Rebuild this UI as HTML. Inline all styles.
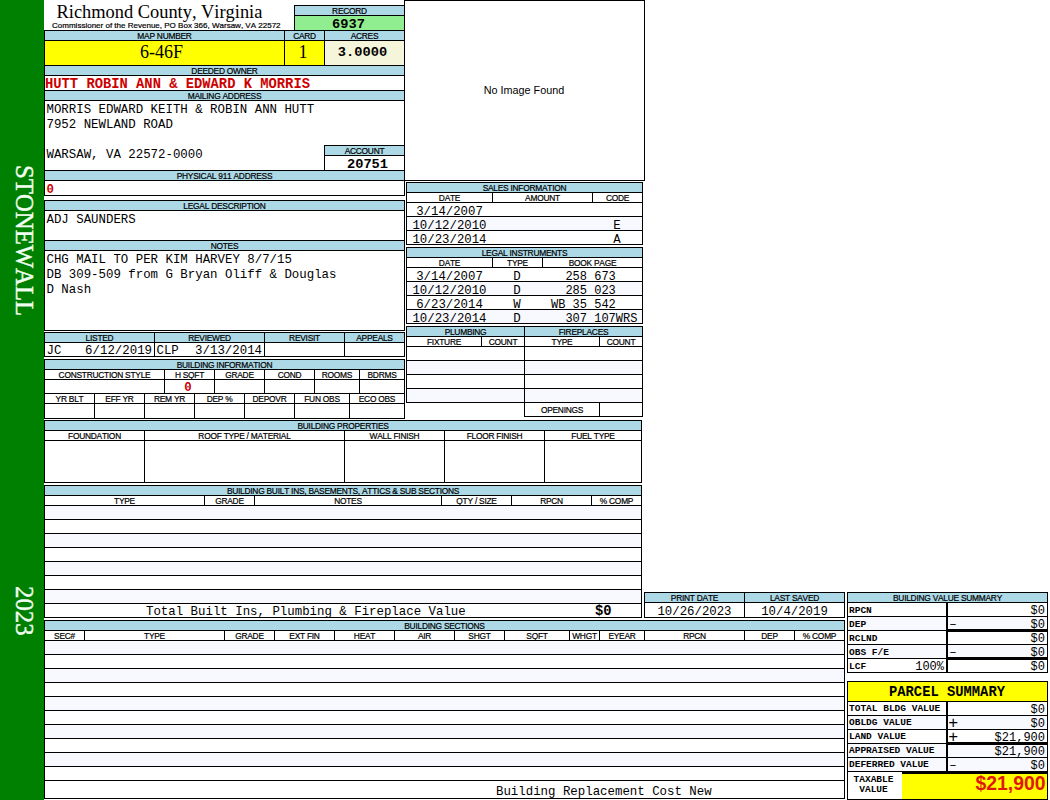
<!DOCTYPE html>
<html><head><meta charset="utf-8"><title>Richmond County, Virginia</title>
<style>
html,body{margin:0;padding:0;background:#fff;}
body{font-kerning:none;font-variant-ligatures:none;width:1050px;height:800px;position:relative;overflow:hidden;font-family:"Liberation Sans",sans-serif;color:#000;}
#bar{position:absolute;left:0;top:0;width:44px;height:800px;background:#008000;}
.v{position:absolute;transform-origin:0 0;transform:rotate(90deg);font-family:"Liberation Serif",serif;font-size:24.75px;line-height:27px;color:#f0fff0;-webkit-text-stroke:0.4px #f0fff0;white-space:nowrap;}
.c{position:absolute;box-sizing:border-box;border:1px solid #000;background:#fff;}
.t{position:absolute;white-space:pre;}
.k{position:absolute;background:#000;}
.sans{font-family:"Liberation Sans",sans-serif;}
.ser{font-family:"Liberation Serif",serif;}
.mono{font-family:"Liberation Mono",monospace;}
</style></head>
<body>
<div id="bar"></div>
<div class="v" style="left:38px;top:165px;">STONEWALL</div>
<div class="v" style="left:38px;top:586px;">2023</div>
<div class="t ser" style="top:2px;font-size:18.4px;line-height:20px;left:56.5px;">Richmond County, Virginia</div>
<div class="t sans" style="top:21px;font-size:8.03px;line-height:9px;left:52px;-webkit-text-stroke:0.2px #000;">Commissioner of the Revenue, PO Box 366, Warsaw, VA 22572</div>
<div class="c" style="left:294px;top:5px;width:111px;height:11px;background:#add8e6;"></div>
<div class="t sans" style="top:6px;font-size:8.4px;line-height:10px;left:264.5px;width:170px;text-align:center;letter-spacing:-0.25px;-webkit-text-stroke:0.2px #000;">RECORD</div>
<div class="c" style="left:294px;top:15px;width:111px;height:16px;background:#90ee90;"></div>
<div class="t mono" style="top:17px;font-size:13.7px;line-height:15px;left:148.5px;width:400px;text-align:center;font-weight:bold;">6937</div>
<div class="c" style="left:44px;top:30px;width:241px;height:11px;background:#add8e6;"></div>
<div class="t sans" style="top:31px;font-size:8.4px;line-height:10px;left:14.5px;width:300px;text-align:center;letter-spacing:-0.25px;-webkit-text-stroke:0.2px #000;">MAP NUMBER</div>
<div class="c" style="left:284px;top:30px;width:41px;height:11px;background:#add8e6;"></div>
<div class="t sans" style="top:31px;font-size:8.4px;line-height:10px;left:254.5px;width:100px;text-align:center;letter-spacing:-0.25px;-webkit-text-stroke:0.2px #000;">CARD</div>
<div class="c" style="left:324px;top:30px;width:81px;height:11px;background:#add8e6;"></div>
<div class="t sans" style="top:31px;font-size:8.4px;line-height:10px;left:294.5px;width:140px;text-align:center;letter-spacing:-0.25px;-webkit-text-stroke:0.2px #000;">ACRES</div>
<div class="c" style="left:44px;top:40px;width:241px;height:26px;background:#ffff00;"></div>
<div class="t ser" style="top:42px;font-size:18px;line-height:20px;left:-38.5px;width:400px;text-align:center;">6-46F</div>
<div class="c" style="left:284px;top:40px;width:41px;height:26px;background:#ffff00;"></div>
<div class="t ser" style="top:42px;font-size:18px;line-height:20px;left:103.0px;width:400px;text-align:center;">1</div>
<div class="c" style="left:324px;top:40px;width:81px;height:26px;background:#f5f5dc;"></div>
<div class="t mono" style="top:45px;font-size:13.7px;line-height:15px;left:162.5px;width:400px;text-align:center;font-weight:bold;">3.0000</div>
<div class="c" style="left:44px;top:65px;width:361px;height:11px;background:#add8e6;"></div>
<div class="t sans" style="top:66px;font-size:8.4px;line-height:10px;left:14.5px;width:420px;text-align:center;letter-spacing:-0.25px;-webkit-text-stroke:0.2px #000;">DEEDED OWNER</div>
<div class="c" style="left:44px;top:75px;width:361px;height:16px;"></div>
<div class="t mono" style="top:77px;font-size:13.8px;line-height:15px;left:45px;font-weight:bold;color:#cc0000;">HUTT ROBIN ANN &amp; EDWARD K MORRIS</div>
<div class="c" style="left:44px;top:90px;width:361px;height:11px;background:#add8e6;"></div>
<div class="t sans" style="top:91px;font-size:8.4px;line-height:10px;left:14.5px;width:420px;text-align:center;letter-spacing:-0.25px;-webkit-text-stroke:0.2px #000;">MAILING ADDRESS</div>
<div class="c" style="left:44px;top:100px;width:361px;height:71px;"></div>
<div class="t mono" style="top:103px;font-size:12.4px;line-height:14px;left:46.5px;">MORRIS EDWARD KEITH &amp; ROBIN ANN HUTT</div>
<div class="t mono" style="top:118px;font-size:12.4px;line-height:14px;left:46.5px;">7952 NEWLAND ROAD</div>
<div class="t mono" style="top:148px;font-size:12.4px;line-height:14px;left:46.5px;">WARSAW, VA 22572-0000</div>
<div class="c" style="left:324px;top:145px;width:81px;height:11px;background:#add8e6;"></div>
<div class="t sans" style="top:146px;font-size:8.4px;line-height:10px;left:294.5px;width:140px;text-align:center;letter-spacing:-0.25px;-webkit-text-stroke:0.2px #000;">ACCOUNT</div>
<div class="c" style="left:324px;top:155px;width:81px;height:16px;"></div>
<div class="t mono" style="top:157px;font-size:13.7px;line-height:15px;left:167.5px;width:400px;text-align:center;font-weight:bold;">20751</div>
<div class="c" style="left:44px;top:170px;width:361px;height:11px;background:#add8e6;"></div>
<div class="t sans" style="top:171px;font-size:8.4px;line-height:10px;left:14.5px;width:420px;text-align:center;letter-spacing:-0.25px;-webkit-text-stroke:0.2px #000;">PHYSICAL 911 ADDRESS</div>
<div class="c" style="left:44px;top:180px;width:361px;height:16px;"></div>
<div class="t mono" style="top:183px;font-size:12.4px;line-height:14px;left:46.5px;font-weight:bold;color:#cc0000;">0</div>
<div class="c" style="left:44px;top:200px;width:361px;height:11px;background:#add8e6;"></div>
<div class="t sans" style="top:201px;font-size:8.4px;line-height:10px;left:14.5px;width:420px;text-align:center;letter-spacing:-0.25px;-webkit-text-stroke:0.2px #000;">LEGAL DESCRIPTION</div>
<div class="c" style="left:44px;top:210px;width:361px;height:31px;"></div>
<div class="t mono" style="top:213px;font-size:12.4px;line-height:14px;left:46.5px;">ADJ SAUNDERS</div>
<div class="c" style="left:44px;top:240px;width:361px;height:11px;background:#add8e6;"></div>
<div class="t sans" style="top:241px;font-size:8.4px;line-height:10px;left:14.5px;width:420px;text-align:center;letter-spacing:-0.25px;-webkit-text-stroke:0.2px #000;">NOTES</div>
<div class="c" style="left:44px;top:250px;width:361px;height:81px;"></div>
<div class="t mono" style="top:253px;font-size:12.4px;line-height:14px;left:46.5px;">CHG MAIL TO PER KIM HARVEY 8/7/15</div>
<div class="t mono" style="top:268px;font-size:12.4px;line-height:14px;left:46.5px;">DB 309-509 from G Bryan Oliff &amp; Douglas</div>
<div class="t mono" style="top:283px;font-size:12.4px;line-height:14px;left:46.5px;">D Nash</div>
<div class="c" style="left:44px;top:332px;width:111px;height:11px;background:#add8e6;"></div>
<div class="t sans" style="top:333px;font-size:8.4px;line-height:10px;left:14.5px;width:170px;text-align:center;letter-spacing:-0.25px;-webkit-text-stroke:0.2px #000;">LISTED</div>
<div class="c" style="left:44px;top:342px;width:111px;height:15px;"></div>
<div class="t mono" style="top:344px;font-size:12.4px;line-height:14px;left:46.5px;">JC</div>
<div class="t mono" style="top:344px;font-size:12.4px;line-height:14px;left:-248px;width:400px;text-align:right;">6/12/2019</div>
<div class="c" style="left:154px;top:332px;width:111px;height:11px;background:#add8e6;"></div>
<div class="t sans" style="top:333px;font-size:8.4px;line-height:10px;left:124.5px;width:170px;text-align:center;letter-spacing:-0.25px;-webkit-text-stroke:0.2px #000;">REVIEWED</div>
<div class="c" style="left:154px;top:342px;width:111px;height:15px;"></div>
<div class="t mono" style="top:344px;font-size:12.4px;line-height:14px;left:156.5px;">CLP</div>
<div class="t mono" style="top:344px;font-size:12.4px;line-height:14px;left:-138px;width:400px;text-align:right;">3/13/2014</div>
<div class="c" style="left:264px;top:332px;width:81px;height:11px;background:#add8e6;"></div>
<div class="t sans" style="top:333px;font-size:8.4px;line-height:10px;left:234.5px;width:140px;text-align:center;letter-spacing:-0.25px;-webkit-text-stroke:0.2px #000;">REVISIT</div>
<div class="c" style="left:264px;top:342px;width:81px;height:15px;"></div>
<div class="c" style="left:344px;top:332px;width:61px;height:11px;background:#add8e6;"></div>
<div class="t sans" style="top:333px;font-size:8.4px;line-height:10px;left:314.5px;width:120px;text-align:center;letter-spacing:-0.25px;-webkit-text-stroke:0.2px #000;">APPEALS</div>
<div class="c" style="left:344px;top:342px;width:61px;height:15px;"></div>
<div class="c" style="left:44px;top:359px;width:361px;height:11px;background:#add8e6;"></div>
<div class="t sans" style="top:360px;font-size:8.4px;line-height:10px;left:14.5px;width:420px;text-align:center;letter-spacing:-0.25px;-webkit-text-stroke:0.2px #000;">BUILDING INFORMATION</div>
<div class="c" style="left:44px;top:369px;width:121px;height:11px;"></div>
<div class="t sans" style="top:370px;font-size:8.4px;line-height:10px;left:14.5px;width:180px;text-align:center;letter-spacing:-0.25px;-webkit-text-stroke:0.2px #000;">CONSTRUCTION STYLE</div>
<div class="c" style="left:44px;top:379px;width:121px;height:15px;"></div>
<div class="c" style="left:164px;top:369px;width:51px;height:11px;"></div>
<div class="t sans" style="top:370px;font-size:8.4px;line-height:10px;left:134.5px;width:110px;text-align:center;letter-spacing:-0.25px;-webkit-text-stroke:0.2px #000;">H SQFT</div>
<div class="c" style="left:164px;top:379px;width:51px;height:15px;"></div>
<div class="c" style="left:214px;top:369px;width:51px;height:11px;"></div>
<div class="t sans" style="top:370px;font-size:8.4px;line-height:10px;left:184.5px;width:110px;text-align:center;letter-spacing:-0.25px;-webkit-text-stroke:0.2px #000;">GRADE</div>
<div class="c" style="left:214px;top:379px;width:51px;height:15px;"></div>
<div class="c" style="left:264px;top:369px;width:51px;height:11px;"></div>
<div class="t sans" style="top:370px;font-size:8.4px;line-height:10px;left:234.5px;width:110px;text-align:center;letter-spacing:-0.25px;-webkit-text-stroke:0.2px #000;">COND</div>
<div class="c" style="left:264px;top:379px;width:51px;height:15px;"></div>
<div class="c" style="left:314px;top:369px;width:46px;height:11px;"></div>
<div class="t sans" style="top:370px;font-size:8.4px;line-height:10px;left:284.5px;width:105px;text-align:center;letter-spacing:-0.25px;-webkit-text-stroke:0.2px #000;">ROOMS</div>
<div class="c" style="left:314px;top:379px;width:46px;height:15px;"></div>
<div class="c" style="left:359px;top:369px;width:46px;height:11px;"></div>
<div class="t sans" style="top:370px;font-size:8.4px;line-height:10px;left:329.5px;width:105px;text-align:center;letter-spacing:-0.25px;-webkit-text-stroke:0.2px #000;">BDRMS</div>
<div class="c" style="left:359px;top:379px;width:46px;height:15px;"></div>
<div class="t mono" style="top:381px;font-size:12.4px;line-height:14px;left:-12.0px;width:400px;text-align:center;font-weight:bold;color:#cc0000;">0</div>
<div class="c" style="left:44px;top:393px;width:51px;height:11px;"></div>
<div class="t sans" style="top:394px;font-size:8.4px;line-height:10px;left:14.5px;width:110px;text-align:center;letter-spacing:-0.25px;-webkit-text-stroke:0.2px #000;">YR BLT</div>
<div class="c" style="left:44px;top:403px;width:51px;height:16px;"></div>
<div class="c" style="left:94px;top:393px;width:51px;height:11px;"></div>
<div class="t sans" style="top:394px;font-size:8.4px;line-height:10px;left:64.5px;width:110px;text-align:center;letter-spacing:-0.25px;-webkit-text-stroke:0.2px #000;">EFF YR</div>
<div class="c" style="left:94px;top:403px;width:51px;height:16px;"></div>
<div class="c" style="left:144px;top:393px;width:51px;height:11px;"></div>
<div class="t sans" style="top:394px;font-size:8.4px;line-height:10px;left:114.5px;width:110px;text-align:center;letter-spacing:-0.25px;-webkit-text-stroke:0.2px #000;">REM YR</div>
<div class="c" style="left:144px;top:403px;width:51px;height:16px;"></div>
<div class="c" style="left:194px;top:393px;width:51px;height:11px;"></div>
<div class="t sans" style="top:394px;font-size:8.4px;line-height:10px;left:164.5px;width:110px;text-align:center;letter-spacing:-0.25px;-webkit-text-stroke:0.2px #000;">DEP %</div>
<div class="c" style="left:194px;top:403px;width:51px;height:16px;"></div>
<div class="c" style="left:244px;top:393px;width:51px;height:11px;"></div>
<div class="t sans" style="top:394px;font-size:8.4px;line-height:10px;left:214.5px;width:110px;text-align:center;letter-spacing:-0.25px;-webkit-text-stroke:0.2px #000;">DEPOVR</div>
<div class="c" style="left:244px;top:403px;width:51px;height:16px;"></div>
<div class="c" style="left:294px;top:393px;width:56px;height:11px;"></div>
<div class="t sans" style="top:394px;font-size:8.4px;line-height:10px;left:264.5px;width:115px;text-align:center;letter-spacing:-0.25px;-webkit-text-stroke:0.2px #000;">FUN OBS</div>
<div class="c" style="left:294px;top:403px;width:56px;height:16px;"></div>
<div class="c" style="left:349px;top:393px;width:56px;height:11px;"></div>
<div class="t sans" style="top:394px;font-size:8.4px;line-height:10px;left:319.5px;width:115px;text-align:center;letter-spacing:-0.25px;-webkit-text-stroke:0.2px #000;">ECO OBS</div>
<div class="c" style="left:349px;top:403px;width:56px;height:16px;"></div>
<div class="c" style="left:44px;top:420px;width:598px;height:11px;background:#add8e6;"></div>
<div class="t sans" style="top:421px;font-size:8.4px;line-height:10px;left:14.5px;width:657px;text-align:center;letter-spacing:-0.25px;-webkit-text-stroke:0.2px #000;">BUILDING PROPERTIES</div>
<div class="c" style="left:44px;top:430px;width:101px;height:11px;"></div>
<div class="t sans" style="top:431px;font-size:8.4px;line-height:10px;left:14.5px;width:160px;text-align:center;letter-spacing:-0.25px;-webkit-text-stroke:0.2px #000;">FOUNDATION</div>
<div class="c" style="left:44px;top:440px;width:101px;height:43px;"></div>
<div class="c" style="left:144px;top:430px;width:201px;height:11px;"></div>
<div class="t sans" style="top:431px;font-size:8.4px;line-height:10px;left:114.5px;width:260px;text-align:center;letter-spacing:-0.25px;-webkit-text-stroke:0.2px #000;">ROOF TYPE / MATERIAL</div>
<div class="c" style="left:144px;top:440px;width:201px;height:43px;"></div>
<div class="c" style="left:344px;top:430px;width:101px;height:11px;"></div>
<div class="t sans" style="top:431px;font-size:8.4px;line-height:10px;left:314.5px;width:160px;text-align:center;letter-spacing:-0.25px;-webkit-text-stroke:0.2px #000;">WALL FINISH</div>
<div class="c" style="left:344px;top:440px;width:101px;height:43px;"></div>
<div class="c" style="left:444px;top:430px;width:101px;height:11px;"></div>
<div class="t sans" style="top:431px;font-size:8.4px;line-height:10px;left:414.5px;width:160px;text-align:center;letter-spacing:-0.25px;-webkit-text-stroke:0.2px #000;">FLOOR FINISH</div>
<div class="c" style="left:444px;top:440px;width:101px;height:43px;"></div>
<div class="c" style="left:544px;top:430px;width:98px;height:11px;"></div>
<div class="t sans" style="top:431px;font-size:8.4px;line-height:10px;left:514.5px;width:157px;text-align:center;letter-spacing:-0.25px;-webkit-text-stroke:0.2px #000;">FUEL TYPE</div>
<div class="c" style="left:544px;top:440px;width:98px;height:43px;"></div>
<div class="c" style="left:44px;top:485px;width:598px;height:11px;background:#add8e6;"></div>
<div class="t sans" style="top:486px;font-size:8.4px;line-height:10px;left:14.5px;width:657px;text-align:center;letter-spacing:-0.25px;-webkit-text-stroke:0.2px #000;">BUILDING BUILT INS, BASEMENTS, ATTICS &amp; SUB SECTIONS</div>
<div class="c" style="left:44px;top:495px;width:161px;height:11px;"></div>
<div class="t sans" style="top:496px;font-size:8.4px;line-height:10px;left:14.5px;width:220px;text-align:center;letter-spacing:-0.25px;-webkit-text-stroke:0.2px #000;">TYPE</div>
<div class="c" style="left:204px;top:495px;width:51px;height:11px;"></div>
<div class="t sans" style="top:496px;font-size:8.4px;line-height:10px;left:174.5px;width:110px;text-align:center;letter-spacing:-0.25px;-webkit-text-stroke:0.2px #000;">GRADE</div>
<div class="c" style="left:254px;top:495px;width:188px;height:11px;"></div>
<div class="t sans" style="top:496px;font-size:8.4px;line-height:10px;left:224.5px;width:247px;text-align:center;letter-spacing:-0.25px;-webkit-text-stroke:0.2px #000;">NOTES</div>
<div class="c" style="left:441px;top:495px;width:71px;height:11px;"></div>
<div class="t sans" style="top:496px;font-size:8.4px;line-height:10px;left:411.5px;width:130px;text-align:center;letter-spacing:-0.25px;-webkit-text-stroke:0.2px #000;">QTY / SIZE</div>
<div class="c" style="left:511px;top:495px;width:81px;height:11px;"></div>
<div class="t sans" style="top:496px;font-size:8.4px;line-height:10px;left:481.5px;width:140px;text-align:center;letter-spacing:-0.25px;-webkit-text-stroke:0.2px #000;">RPCN</div>
<div class="c" style="left:591px;top:495px;width:51px;height:11px;"></div>
<div class="t sans" style="top:496px;font-size:8.4px;line-height:10px;left:561.5px;width:110px;text-align:center;letter-spacing:-0.25px;-webkit-text-stroke:0.2px #000;">% COMP</div>
<div class="c" style="left:44px;top:505px;width:598px;height:15px;background:#f8f8ff;"></div>
<div class="c" style="left:44px;top:519px;width:598px;height:15px;"></div>
<div class="c" style="left:44px;top:533px;width:598px;height:15px;background:#f8f8ff;"></div>
<div class="c" style="left:44px;top:547px;width:598px;height:15px;"></div>
<div class="c" style="left:44px;top:561px;width:598px;height:15px;background:#f8f8ff;"></div>
<div class="c" style="left:44px;top:575px;width:598px;height:15px;"></div>
<div class="c" style="left:44px;top:589px;width:598px;height:15px;background:#f8f8ff;"></div>
<div class="c" style="left:44px;top:603px;width:598px;height:15px;"></div>
<div class="t mono" style="top:605px;font-size:12.4px;line-height:14px;left:146px;">Total Built Ins, Plumbing &amp; Fireplace Value</div>
<div class="t mono" style="top:604px;font-size:13.8px;line-height:15px;left:595px;font-weight:bold;">$0</div>
<div class="c" style="left:404px;top:0px;width:241px;height:181px;"></div>
<div class="t sans" style="top:84px;font-size:10.8px;line-height:12px;left:324.0px;width:400px;text-align:center;">No Image Found</div>
<div class="c" style="left:406px;top:182px;width:237px;height:11px;background:#add8e6;"></div>
<div class="t sans" style="top:183px;font-size:8.4px;line-height:10px;left:376.5px;width:296px;text-align:center;letter-spacing:-0.25px;-webkit-text-stroke:0.2px #000;">SALES INFORMATION</div>
<div class="c" style="left:406px;top:192px;width:87px;height:11px;"></div>
<div class="t sans" style="top:193px;font-size:8.4px;line-height:10px;left:376.5px;width:146px;text-align:center;letter-spacing:-0.25px;-webkit-text-stroke:0.2px #000;">DATE</div>
<div class="c" style="left:492px;top:192px;width:101px;height:11px;"></div>
<div class="t sans" style="top:193px;font-size:8.4px;line-height:10px;left:462.5px;width:160px;text-align:center;letter-spacing:-0.25px;-webkit-text-stroke:0.2px #000;">AMOUNT</div>
<div class="c" style="left:592px;top:192px;width:51px;height:11px;"></div>
<div class="t sans" style="top:193px;font-size:8.4px;line-height:10px;left:562.5px;width:110px;text-align:center;letter-spacing:-0.25px;-webkit-text-stroke:0.2px #000;">CODE</div>
<div class="c" style="left:406px;top:202px;width:237px;height:15px;"></div>
<div class="t mono" style="top:205px;font-size:12.35px;line-height:14px;left:249.5px;width:400px;text-align:center;">3/14/2007</div>
<div class="c" style="left:406px;top:216px;width:237px;height:15px;background:#f8f8ff;"></div>
<div class="t mono" style="top:219px;font-size:12.35px;line-height:14px;left:249.5px;width:400px;text-align:center;">10/12/2010</div>
<div class="t mono" style="top:219px;font-size:12.4px;line-height:14px;left:417.0px;width:400px;text-align:center;">E</div>
<div class="c" style="left:406px;top:230px;width:237px;height:15px;"></div>
<div class="t mono" style="top:233px;font-size:12.35px;line-height:14px;left:249.5px;width:400px;text-align:center;">10/23/2014</div>
<div class="t mono" style="top:233px;font-size:12.4px;line-height:14px;left:417.0px;width:400px;text-align:center;">A</div>
<div class="c" style="left:406px;top:247px;width:237px;height:11px;background:#add8e6;"></div>
<div class="t sans" style="top:248px;font-size:8.4px;line-height:10px;left:376.5px;width:296px;text-align:center;letter-spacing:-0.25px;-webkit-text-stroke:0.2px #000;">LEGAL INSTRUMENTS</div>
<div class="c" style="left:406px;top:257px;width:87px;height:11px;"></div>
<div class="t sans" style="top:258px;font-size:8.4px;line-height:10px;left:376.5px;width:146px;text-align:center;letter-spacing:-0.25px;-webkit-text-stroke:0.2px #000;">DATE</div>
<div class="c" style="left:492px;top:257px;width:51px;height:11px;"></div>
<div class="t sans" style="top:258px;font-size:8.4px;line-height:10px;left:462.5px;width:110px;text-align:center;letter-spacing:-0.25px;-webkit-text-stroke:0.2px #000;">TYPE</div>
<div class="c" style="left:542px;top:257px;width:101px;height:11px;"></div>
<div class="t sans" style="top:258px;font-size:8.4px;line-height:10px;left:512.5px;width:160px;text-align:center;letter-spacing:-0.25px;-webkit-text-stroke:0.2px #000;">BOOK PAGE</div>
<div class="c" style="left:406px;top:267px;width:237px;height:15px;"></div>
<div class="t mono" style="top:270px;font-size:12.35px;line-height:14px;left:249.5px;width:400px;text-align:center;">3/14/2007</div>
<div class="t mono" style="top:270px;font-size:12.4px;line-height:14px;left:317.0px;width:400px;text-align:center;">D</div>
<div class="t mono" style="top:270px;font-size:12px;line-height:14px;left:551px;">  258 673</div>
<div class="c" style="left:406px;top:281px;width:237px;height:15px;background:#f8f8ff;"></div>
<div class="t mono" style="top:284px;font-size:12.35px;line-height:14px;left:249.5px;width:400px;text-align:center;">10/12/2010</div>
<div class="t mono" style="top:284px;font-size:12.4px;line-height:14px;left:317.0px;width:400px;text-align:center;">D</div>
<div class="t mono" style="top:284px;font-size:12px;line-height:14px;left:551px;">  285 023</div>
<div class="c" style="left:406px;top:295px;width:237px;height:15px;"></div>
<div class="t mono" style="top:298px;font-size:12.35px;line-height:14px;left:249.5px;width:400px;text-align:center;">6/23/2014</div>
<div class="t mono" style="top:298px;font-size:12.4px;line-height:14px;left:317.0px;width:400px;text-align:center;">W</div>
<div class="t mono" style="top:298px;font-size:12px;line-height:14px;left:551px;">WB 35 542</div>
<div class="c" style="left:406px;top:309px;width:237px;height:15px;background:#f8f8ff;"></div>
<div class="t mono" style="top:312px;font-size:12.35px;line-height:14px;left:249.5px;width:400px;text-align:center;">10/23/2014</div>
<div class="t mono" style="top:312px;font-size:12.4px;line-height:14px;left:317.0px;width:400px;text-align:center;">D</div>
<div class="t mono" style="top:312px;font-size:12px;line-height:14px;left:551px;">  307 107WRS</div>
<div class="c" style="left:406px;top:326px;width:119px;height:11px;background:#add8e6;"></div>
<div class="t sans" style="top:327px;font-size:8.4px;line-height:10px;left:376.5px;width:178px;text-align:center;letter-spacing:-0.25px;-webkit-text-stroke:0.2px #000;">PLUMBING</div>
<div class="c" style="left:524px;top:326px;width:119px;height:11px;background:#add8e6;"></div>
<div class="t sans" style="top:327px;font-size:8.4px;line-height:10px;left:494.5px;width:178px;text-align:center;letter-spacing:-0.25px;-webkit-text-stroke:0.2px #000;">FIREPLACES</div>
<div class="c" style="left:406px;top:336px;width:76px;height:11px;"></div>
<div class="t sans" style="top:337px;font-size:8.4px;line-height:10px;left:376.5px;width:135px;text-align:center;letter-spacing:-0.25px;-webkit-text-stroke:0.2px #000;">FIXTURE</div>
<div class="c" style="left:481px;top:336px;width:44px;height:11px;"></div>
<div class="t sans" style="top:337px;font-size:8.4px;line-height:10px;left:451.5px;width:103px;text-align:center;letter-spacing:-0.25px;-webkit-text-stroke:0.2px #000;">COUNT</div>
<div class="c" style="left:524px;top:336px;width:76px;height:11px;"></div>
<div class="t sans" style="top:337px;font-size:8.4px;line-height:10px;left:494.5px;width:135px;text-align:center;letter-spacing:-0.25px;-webkit-text-stroke:0.2px #000;">TYPE</div>
<div class="c" style="left:599px;top:336px;width:44px;height:11px;"></div>
<div class="t sans" style="top:337px;font-size:8.4px;line-height:10px;left:569.5px;width:103px;text-align:center;letter-spacing:-0.25px;-webkit-text-stroke:0.2px #000;">COUNT</div>
<div class="c" style="left:406px;top:346px;width:119px;height:15px;"></div>
<div class="c" style="left:524px;top:346px;width:119px;height:15px;"></div>
<div class="c" style="left:406px;top:360px;width:119px;height:15px;background:#f8f8ff;"></div>
<div class="c" style="left:524px;top:360px;width:119px;height:15px;background:#f8f8ff;"></div>
<div class="c" style="left:406px;top:374px;width:119px;height:15px;"></div>
<div class="c" style="left:524px;top:374px;width:119px;height:15px;"></div>
<div class="c" style="left:406px;top:388px;width:119px;height:15px;background:#f8f8ff;"></div>
<div class="c" style="left:524px;top:388px;width:119px;height:15px;background:#f8f8ff;"></div>
<div class="c" style="left:524px;top:402px;width:76px;height:15px;"></div>
<div class="t sans" style="top:405px;font-size:8.4px;line-height:10px;left:362.0px;width:400px;text-align:center;letter-spacing:-0.25px;-webkit-text-stroke:0.2px #000;">OPENINGS</div>
<div class="c" style="left:599px;top:402px;width:44px;height:15px;"></div>
<div class="c" style="left:644px;top:592px;width:101px;height:11px;background:#add8e6;"></div>
<div class="t sans" style="top:593px;font-size:8.4px;line-height:10px;left:614.5px;width:160px;text-align:center;letter-spacing:-0.25px;-webkit-text-stroke:0.2px #000;">PRINT DATE</div>
<div class="c" style="left:744px;top:592px;width:101px;height:11px;background:#add8e6;"></div>
<div class="t sans" style="top:593px;font-size:8.4px;line-height:10px;left:714.5px;width:160px;text-align:center;letter-spacing:-0.25px;-webkit-text-stroke:0.2px #000;">LAST SAVED</div>
<div class="c" style="left:644px;top:602px;width:101px;height:16px;"></div>
<div class="t mono" style="top:605px;font-size:12.35px;line-height:14px;left:494.5px;width:400px;text-align:center;">10/26/2023</div>
<div class="c" style="left:744px;top:602px;width:101px;height:16px;"></div>
<div class="t mono" style="top:605px;font-size:12.35px;line-height:14px;left:594.5px;width:400px;text-align:center;">10/4/2019</div>
<div class="c" style="left:44px;top:620px;width:801px;height:11px;background:#add8e6;"></div>
<div class="t sans" style="top:621px;font-size:8.4px;line-height:10px;left:14.5px;width:860px;text-align:center;letter-spacing:-0.25px;-webkit-text-stroke:0.2px #000;">BUILDING SECTIONS</div>
<div class="c" style="left:44px;top:630px;width:41px;height:11px;"></div>
<div class="t sans" style="top:631px;font-size:8.4px;line-height:10px;left:14.5px;width:100px;text-align:center;letter-spacing:-0.25px;-webkit-text-stroke:0.2px #000;">SEC#</div>
<div class="c" style="left:84px;top:630px;width:141px;height:11px;"></div>
<div class="t sans" style="top:631px;font-size:8.4px;line-height:10px;left:54.5px;width:200px;text-align:center;letter-spacing:-0.25px;-webkit-text-stroke:0.2px #000;">TYPE</div>
<div class="c" style="left:224px;top:630px;width:51px;height:11px;"></div>
<div class="t sans" style="top:631px;font-size:8.4px;line-height:10px;left:194.5px;width:110px;text-align:center;letter-spacing:-0.25px;-webkit-text-stroke:0.2px #000;">GRADE</div>
<div class="c" style="left:274px;top:630px;width:61px;height:11px;"></div>
<div class="t sans" style="top:631px;font-size:8.4px;line-height:10px;left:244.5px;width:120px;text-align:center;letter-spacing:-0.25px;-webkit-text-stroke:0.2px #000;">EXT FIN</div>
<div class="c" style="left:334px;top:630px;width:61px;height:11px;"></div>
<div class="t sans" style="top:631px;font-size:8.4px;line-height:10px;left:304.5px;width:120px;text-align:center;letter-spacing:-0.25px;-webkit-text-stroke:0.2px #000;">HEAT</div>
<div class="c" style="left:394px;top:630px;width:61px;height:11px;"></div>
<div class="t sans" style="top:631px;font-size:8.4px;line-height:10px;left:364.5px;width:120px;text-align:center;letter-spacing:-0.25px;-webkit-text-stroke:0.2px #000;">AIR</div>
<div class="c" style="left:454px;top:630px;width:51px;height:11px;"></div>
<div class="t sans" style="top:631px;font-size:8.4px;line-height:10px;left:424.5px;width:110px;text-align:center;letter-spacing:-0.25px;-webkit-text-stroke:0.2px #000;">SHGT</div>
<div class="c" style="left:504px;top:630px;width:66px;height:11px;"></div>
<div class="t sans" style="top:631px;font-size:8.4px;line-height:10px;left:474.5px;width:125px;text-align:center;letter-spacing:-0.25px;-webkit-text-stroke:0.2px #000;">SQFT</div>
<div class="c" style="left:569px;top:630px;width:31px;height:11px;"></div>
<div class="t sans" style="top:631px;font-size:8.4px;line-height:10px;left:539.5px;width:90px;text-align:center;letter-spacing:-0.25px;-webkit-text-stroke:0.2px #000;">WHGT</div>
<div class="c" style="left:599px;top:630px;width:46px;height:11px;"></div>
<div class="t sans" style="top:631px;font-size:8.4px;line-height:10px;left:569.5px;width:105px;text-align:center;letter-spacing:-0.25px;-webkit-text-stroke:0.2px #000;">EYEAR</div>
<div class="c" style="left:644px;top:630px;width:101px;height:11px;"></div>
<div class="t sans" style="top:631px;font-size:8.4px;line-height:10px;left:614.5px;width:160px;text-align:center;letter-spacing:-0.25px;-webkit-text-stroke:0.2px #000;">RPCN</div>
<div class="c" style="left:744px;top:630px;width:51px;height:11px;"></div>
<div class="t sans" style="top:631px;font-size:8.4px;line-height:10px;left:714.5px;width:110px;text-align:center;letter-spacing:-0.25px;-webkit-text-stroke:0.2px #000;">DEP</div>
<div class="c" style="left:794px;top:630px;width:51px;height:11px;"></div>
<div class="t sans" style="top:631px;font-size:8.4px;line-height:10px;left:764.5px;width:110px;text-align:center;letter-spacing:-0.25px;-webkit-text-stroke:0.2px #000;">% COMP</div>
<div class="c" style="left:44px;top:640px;width:801px;height:15px;background:#f8f8ff;"></div>
<div class="c" style="left:44px;top:654px;width:801px;height:15px;"></div>
<div class="c" style="left:44px;top:668px;width:801px;height:15px;background:#f8f8ff;"></div>
<div class="c" style="left:44px;top:682px;width:801px;height:15px;"></div>
<div class="c" style="left:44px;top:696px;width:801px;height:15px;background:#f8f8ff;"></div>
<div class="c" style="left:44px;top:710px;width:801px;height:15px;"></div>
<div class="c" style="left:44px;top:724px;width:801px;height:15px;background:#f8f8ff;"></div>
<div class="c" style="left:44px;top:738px;width:801px;height:15px;"></div>
<div class="c" style="left:44px;top:752px;width:801px;height:15px;background:#f8f8ff;"></div>
<div class="c" style="left:44px;top:766px;width:801px;height:15px;"></div>
<div class="c" style="left:44px;top:780px;width:801px;height:19px;"></div>
<div class="t mono" style="top:785px;font-size:12.4px;line-height:14px;left:496px;">Building Replacement Cost New</div>
<div class="c" style="left:847px;top:592px;width:201px;height:11px;background:#add8e6;"></div>
<div class="t sans" style="top:593px;font-size:8.4px;line-height:10px;left:817.5px;width:260px;text-align:center;letter-spacing:-0.25px;-webkit-text-stroke:0.2px #000;">BUILDING VALUE SUMMARY</div>
<div class="c" style="left:847px;top:602px;width:101px;height:15px;"></div>
<div class="c" style="left:947px;top:602px;width:101px;height:15px;"></div>
<div class="t mono" style="top:605px;font-size:9.5px;line-height:11px;left:849px;font-weight:bold;">RPCN</div>
<div class="t mono" style="top:604px;font-size:12px;line-height:14px;left:645px;width:400px;text-align:right;">$0</div>
<div class="c" style="left:847px;top:616px;width:101px;height:15px;background:#f8f8ff;"></div>
<div class="c" style="left:947px;top:616px;width:101px;height:15px;background:#f8f8ff;"></div>
<div class="t mono" style="top:619px;font-size:9.5px;line-height:11px;left:849px;font-weight:bold;">DEP</div>
<div class="t mono" style="top:618px;font-size:12px;line-height:14px;left:645px;width:400px;text-align:right;">$0</div>
<div class="t mono" style="top:618px;font-size:12.4px;line-height:14px;left:938.0px;width:30px;text-align:center;">&#8211;</div>
<div class="c" style="left:847px;top:630px;width:101px;height:15px;"></div>
<div class="c" style="left:947px;top:630px;width:101px;height:15px;"></div>
<div class="t mono" style="top:633px;font-size:9.5px;line-height:11px;left:849px;font-weight:bold;">RCLND</div>
<div class="t mono" style="top:632px;font-size:12px;line-height:14px;left:645px;width:400px;text-align:right;">$0</div>
<div class="c" style="left:847px;top:644px;width:101px;height:15px;background:#f8f8ff;"></div>
<div class="c" style="left:947px;top:644px;width:101px;height:15px;background:#f8f8ff;"></div>
<div class="t mono" style="top:647px;font-size:9.5px;line-height:11px;left:849px;font-weight:bold;">OBS F/E</div>
<div class="t mono" style="top:646px;font-size:12px;line-height:14px;left:645px;width:400px;text-align:right;">$0</div>
<div class="t mono" style="top:646px;font-size:12.4px;line-height:14px;left:938.0px;width:30px;text-align:center;">&#8211;</div>
<div class="c" style="left:847px;top:658px;width:101px;height:15px;"></div>
<div class="c" style="left:947px;top:658px;width:101px;height:15px;"></div>
<div class="t mono" style="top:661px;font-size:9.5px;line-height:11px;left:849px;font-weight:bold;">LCF</div>
<div class="t mono" style="top:660px;font-size:12px;line-height:14px;left:645px;width:400px;text-align:right;">$0</div>
<div class="t mono" style="top:660px;font-size:12px;line-height:14px;left:544px;width:400px;text-align:right;">100%</div>
<div class="k" style="left:946px;top:602px;width:2px;height:71px;"></div>
<div class="k" style="left:947px;top:629px;width:101px;height:3px;"></div>
<div class="k" style="left:947px;top:657px;width:101px;height:3px;"></div>
<div class="c" style="left:847px;top:681px;width:201px;height:21px;background:#ffff00;"></div>
<div class="t mono" style="top:685px;font-size:13.8px;line-height:15px;left:747.0px;width:400px;text-align:center;font-weight:bold;">PARCEL SUMMARY</div>
<div class="c" style="left:847px;top:701px;width:101px;height:15px;"></div>
<div class="c" style="left:947px;top:701px;width:101px;height:15px;"></div>
<div class="t mono" style="top:703px;font-size:9.5px;line-height:11px;left:849px;font-weight:bold;">TOTAL BLDG VALUE</div>
<div class="t mono" style="top:703px;font-size:12px;line-height:14px;left:645px;width:400px;text-align:right;">$0</div>
<div class="c" style="left:847px;top:715px;width:101px;height:15px;background:#f8f8ff;"></div>
<div class="c" style="left:947px;top:715px;width:101px;height:15px;background:#f8f8ff;"></div>
<div class="t mono" style="top:717px;font-size:9.5px;line-height:11px;left:849px;font-weight:bold;">OBLDG VALUE</div>
<div class="t mono" style="top:717px;font-size:12px;line-height:14px;left:645px;width:400px;text-align:right;">$0</div>
<div class="t mono" style="top:714px;font-size:16.5px;line-height:19px;left:938.3px;width:30px;text-align:center;">+</div>
<div class="c" style="left:847px;top:729px;width:101px;height:15px;"></div>
<div class="c" style="left:947px;top:729px;width:101px;height:15px;"></div>
<div class="t mono" style="top:731px;font-size:9.5px;line-height:11px;left:849px;font-weight:bold;">LAND VALUE</div>
<div class="t mono" style="top:731px;font-size:12px;line-height:14px;left:645px;width:400px;text-align:right;">$21,900</div>
<div class="t mono" style="top:728px;font-size:16.5px;line-height:19px;left:938.3px;width:30px;text-align:center;">+</div>
<div class="c" style="left:847px;top:743px;width:101px;height:15px;background:#f8f8ff;"></div>
<div class="c" style="left:947px;top:743px;width:101px;height:15px;background:#f8f8ff;"></div>
<div class="t mono" style="top:745px;font-size:9.5px;line-height:11px;left:849px;font-weight:bold;">APPRAISED VALUE</div>
<div class="t mono" style="top:745px;font-size:12px;line-height:14px;left:645px;width:400px;text-align:right;">$21,900</div>
<div class="c" style="left:847px;top:757px;width:101px;height:15px;background:#f8f8ff;"></div>
<div class="c" style="left:947px;top:757px;width:101px;height:15px;background:#f8f8ff;"></div>
<div class="t mono" style="top:759px;font-size:9.5px;line-height:11px;left:849px;font-weight:bold;">DEFERRED VALUE</div>
<div class="t mono" style="top:759px;font-size:12px;line-height:14px;left:645px;width:400px;text-align:right;">$0</div>
<div class="t mono" style="top:759px;font-size:12.4px;line-height:14px;left:938.0px;width:30px;text-align:center;">&#8211;</div>
<div class="c" style="left:847px;top:771px;width:201px;height:29px;"></div>
<div class="t mono" style="top:774px;font-size:9.5px;line-height:11px;left:673.5px;width:400px;text-align:center;font-weight:bold;">TAXABLE</div>
<div class="t mono" style="top:784px;font-size:9.5px;line-height:11px;left:673.5px;width:400px;text-align:center;font-weight:bold;">VALUE</div>
<div class="t" style="left:902px;top:772px;width:145px;height:27px;background:#ffff00;"></div>
<div class="t sans" style="top:772px;font-size:19.4px;line-height:22px;left:645.5px;width:400px;text-align:right;font-weight:bold;color:#e0180a;">$21,900</div>
<div class="k" style="left:946px;top:701px;width:2px;height:71px;"></div>
<div class="k" style="left:947px;top:742px;width:101px;height:3px;"></div>
<div class="k" style="left:902px;top:771px;width:146px;height:3px;"></div>
</body></html>
